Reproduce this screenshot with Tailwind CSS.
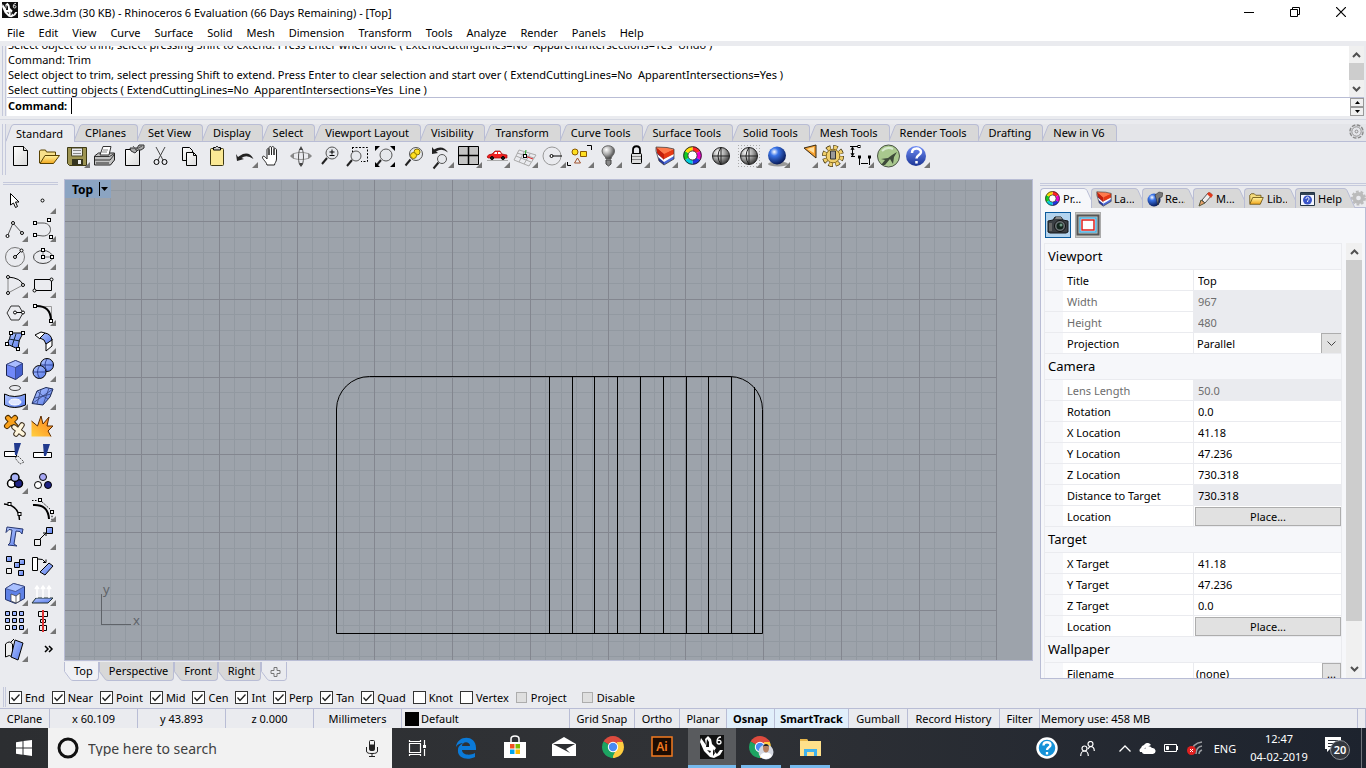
<!DOCTYPE html>
<html lang="en">
<head>
    <meta charset="UTF-8">
    <meta name="viewport" content="width=device-width, initial-scale=1.0">
    <title>sdwe.3dm (30 KB) - Rhinoceros 6 Evaluation (66 Days Remaining) - [Top]</title>
    <script src="https://cdn.jsdelivr.net/npm/@tailwindcss/browser@4"></script>
    <style>
        body { font-family: 'Noto Sans', 'Open Sans', sans-serif; }
    </style>
</head>
<body class="h-screen flex flex-col overflow-hidden bg-[#eaebef] text-black text-[11px] leading-[15px] whitespace-nowrap">
    <!-- shared gradients and symbols -->
    <svg class="absolute w-0 h-0" aria-hidden="true">
        <defs>
            <linearGradient id="gBlue" x1="0" y1="0" x2="1" y2="1"><stop offset="0" stop-color="#b5c8ff"/><stop offset="1" stop-color="#5478ea"/></linearGradient>
            <linearGradient id="gYellow" x1="0" y1="0" x2="0" y2="1"><stop offset="0" stop-color="#fff3a0"/><stop offset="1" stop-color="#f2a71c"/></linearGradient>
            <linearGradient id="gPage" x1="0" y1="0" x2="1" y2="1"><stop offset="0" stop-color="#fff"/><stop offset="1" stop-color="#d9d9d9"/></linearGradient>
            <linearGradient id="gHelp" x1="0" y1="0" x2="0" y2="1"><stop offset="0" stop-color="#6f8cf5"/><stop offset="1" stop-color="#1b3596"/></linearGradient>
            <linearGradient id="gOrange" x1="1" y1="0" x2="0" y2="1"><stop offset="0" stop-color="#ff7d1a"/><stop offset="1" stop-color="#ffd040"/></linearGradient>
            <radialGradient id="gGray" cx=".35" cy=".3" r=".75"><stop offset="0" stop-color="#fff"/><stop offset=".5" stop-color="#a5a5a5"/><stop offset="1" stop-color="#333"/></radialGradient>
            <radialGradient id="gBall" cx=".35" cy=".3" r=".75"><stop offset="0" stop-color="#fff"/><stop offset=".3" stop-color="#3a74e8"/><stop offset="1" stop-color="#04134d"/></radialGradient>
            <symbol id="wheel" viewBox="0 0 20 20">
                <g fill="none" stroke-width="5">
                    <path stroke="#f22" d="M10 3A7 7 0 0 1 16.1 6.5"/><path stroke="#e0c" d="M16.1 6.5A7 7 0 0 1 16.1 13.5"/><path stroke="#23d" d="M16.1 13.5A7 7 0 0 1 10 17"/>
                    <path stroke="#0cd" d="M10 17A7 7 0 0 1 3.9 13.5"/><path stroke="#1c2" d="M3.9 13.5A7 7 0 0 1 3.9 6.5"/><path stroke="#fd0" d="M3.9 6.5A7 7 0 0 1 10 3"/>
                </g>
                <circle cx="10" cy="10" r="9.3" fill="none" stroke="#222"/><circle cx="10" cy="10" r="4.8" fill="#fff" stroke="#333"/>
            </symbol>
            <symbol id="layers" viewBox="0 0 20 20">
                <path d="M2 6l7 6v7l-5-4z" fill="#26379c"/><path d="M9 12l10-5v6l-10 6z" fill="#4a68d8"/>
                <path d="M2 8l7 5v3l-6-5z" fill="#fff"/><path d="M9 13l10-6v3l-10 6z" fill="#fff"/>
                <path d="M1 1l8 6v7L2 7z" fill="#c3200c"/><path d="M9 7l10-4v5L9 13z" fill="#e63a14"/><path d="M1 1l11 .5L19 3 9 8z" fill="#ff7a4c"/>
                <path d="M1 1l11 .5L19 3v10L9 19l-5-4L1 5z" fill="none" stroke="#333" stroke-width=".7"/>
            </symbol>
            <symbol id="rhino" viewBox="0 0 24 24">
                <path fill="#111" d="M0 0h24v24H0z"/>
                <path fill="#fff" d="M1 3l5 7-1-6 3-3 3 3 1 5 4 4-2 3 3 3 3-4 3 0-3 5-6 3-4-1-6-6-4-9z"/><path fill="#111" d="M7 4l2 3v5l-3 0zM7 15l4 1-1 2zM13 14l2 4-2 3z"/>
                <path fill="none" stroke="#fff" stroke-width="1.300" d="M21 2c-3 0-4 2-4 5a2 2 0 1 0 4 0c0-2-3-2-4-1"/>
            </symbol>
            <symbol id="chrome" viewBox="0 0 24 24">
                <path fill="#dd4b3e" d="M12 12L2.500 6.500A11 11 0 0 1 21.500 6.500z"/><path fill="#ffcd40" d="M12 12h0l9.500-5.500A11 11 0 0 1 12 23z"/><path fill="#1da462" d="M12 12V23A11 11 0 0 1 2.500 6.500z"/>
                <path fill="#dd4b3e" d="M12 7h9.800L21 5H8z"/><path fill="#ffcd40" d="M17 14l-5 9 2-.2L21.800 7H16z"/><path fill="#1da462" d="M2.500 6.500L8 15l6 2-3 6-6-3z"/>
                <circle cx="12" cy="12" r="5.200" fill="#fff"/><circle cx="12" cy="12" r="4.200" fill="#4a8af4"/>
            </symbol>
            <symbol id="folder" viewBox="0 0 20 16">
                <path d="M1 14V3l2-2h4l2 2h7v3" fill="#f5dc7c" stroke="#5a4200"/><path d="M1 15L5 6h14l-4 9z" fill="url(#gYellow)" stroke="#5a4200"/>
            </symbol>
        </defs>
    </svg>

    <!-- title bar -->
    <header class="bg-white">
        <div class="flex items-center h-6 pl-[2px]">
            <svg class="size-4 mb-1"><use href="#rhino"/></svg>
            <h1 class="ml-[5px] flex-1">sdwe.3dm (30 KB) - Rhinoceros 6 Evaluation (66 Days Remaining) - [Top]</h1>
            <button aria-label="Minimize" class="w-[46px] h-5 grid place-items-center"><svg width="10" height="10" stroke="#000"><path d="M0 5.500h10"/></svg></button>
            <button aria-label="Restore" class="w-[46px] h-5 grid place-items-center"><svg width="10" height="10" fill="none" stroke="#000"><path d="M.5 2.500h7v7h-7zM2.500 2.500v-2h7v7h-2"/></svg></button>
            <button aria-label="Close" class="w-[46px] h-5 grid place-items-center"><svg width="10" height="10" stroke="#000" stroke-width="1.200"><path d="M0 0l10 10M10 0L0 10"/></svg></button>
            <span class="w-[2px]"></span>
        </div>
        <nav id="menu" class="flex h-[17px] items-center gap-[14px] pl-[7px]"></nav>
    </header>

    <!-- command history and prompt -->
    <section class="mt-[5px] h-[70px] flex pl-[2px] pr-[2px]">
        <div class="w-[5px] border-l border-[#c5c9dc]"><div class="ml-[2px] h-full border-l border-[#c5c9dc]"></div></div>
        <div class="flex-1 flex flex-col min-w-0">
            <div class="h-[51px] flex bg-white">
                <div class="flex-1 overflow-hidden flex flex-col justify-end pl-px whitespace-pre"><p>Select object to trim, select pressing Shift to extend. Press Enter when done ( ExtendCuttingLines=No  ApparentIntersections=Yes  Undo )</p><p>Command: Trim</p><p>Select object to trim, select pressing Shift to extend. Press Enter to clear selection and start over ( ExtendCuttingLines=No  ApparentIntersections=Yes )</p><p>Select cutting objects ( ExtendCuttingLines=No  ApparentIntersections=Yes  Line )</p></div>
                <div class="w-[15px] bg-[#f0f0f0] flex flex-col items-center">
                    <svg class="h-[17px]" width="9" fill="none" stroke="#505050" stroke-width="2"><path d="M1 11l3.500-3.500L8 11"/></svg>
                    <div class="w-full h-[17px] bg-[#cdcdcd]"></div>
                    <svg class="h-[17px]" width="9" fill="none" stroke="#505050" stroke-width="2"><path d="M1 7l3.500 3.500L8 7"/></svg>
                </div>
            </div>
            <div class="flex-1 flex bg-white border-t border-[#b9bdd5]">
                <label for="cmd" class="font-bold pl-px mr-1">Command:</label>
                <span class="w-px h-4 bg-black"></span>
                <input id="cmd" type="text" class="flex-1 h-4 outline-none">
                <div class="w-[14px] flex flex-col">
                    <button aria-label="Previous" class="flex-1 bg-[#f0f0f0] border border-[#999] grid place-items-center"><svg width="5" height="3"><path d="M0 3L2.500 0 5 3z"/></svg></button>
                    <button aria-label="Next" class="flex-1 bg-[#f0f0f0] border border-[#999] grid place-items-center"><svg width="5" height="3"><path d="M0 0l2.500 3L5 0z"/></svg></button>
                </div>
            </div>
        </div>
    </section>

    <!-- toolbar tabs -->
    <section class="mt-[3px] h-[60px] border-t border-[#d5d8e2] flex pl-[2px]">
        <div class="my-1 w-[4px] border-x border-[#c5c9dc]"></div>
        <div class="flex-1 min-w-0">
            <div class="mt-1 flex items-end justify-between border-b border-[#b9bdd5] bg-[#e4e5e9]">
                <div id="toolTabs" class="flex" role="tablist"></div>
                <button aria-label="Options" class="mr-[2px] mb-[2px]"><svg width="15" height="15" viewBox="0 0 16 16" fill="none" stroke="#8a8a8a"><circle cx="8" cy="8" r="7" stroke-dasharray="4 1.500" stroke-width="1.500"/><circle cx="8" cy="8" r="5"/><circle cx="8" cy="8" r="1.500"/></svg></button>
            </div>
            <div id="toolbar" class="flex h-[37px]" role="toolbar"></div>
        </div>
    </section>

    <!-- workspace -->
    <main class="flex-1 min-h-0 flex">
        <aside class="w-16 shrink-0 pt-[3px]">
            <div class="ml-[3px] mr-[6px] h-[3px] border-y border-[#c5c9dc]"></div>
            <div id="tools" class="mt-[3px] grid grid-cols-[28px_28px]" role="toolbar"></div>
        </aside>

        <section class="flex-1 min-w-0 flex flex-col">
            <div class="relative h-[482px] border border-[#b9bdd5] bg-[#9da3ab] overflow-hidden">
                <svg id="view" class="block w-full h-full" shape-rendering="crispEdges">
                    <g id="minor" stroke="#9299a1"></g>
                    <g id="major" stroke="#83868f"></g>
                    <path d="M36.500 414v30.500H66" fill="none" stroke="#5f6369"/>
                    <g fill="#5f6369" font-size="13"><text x="38" y="414">y</text><text x="68" y="445">x</text></g>
                    <g id="stripes" stroke="#000"></g>
                    <path d="M271.500 453.500V229a33 33 0 0 1 33-32.500H665a33 33 0 0 1 32.500 33V453.500z" fill="none" stroke="#000" shape-rendering="auto"/>
                </svg>
                <button class="absolute left-0 top-0 h-[18px] w-[46px] pl-[7px] flex items-center gap-[6px] bg-[#8ba4c2] font-bold text-[12px]">Top
                    <svg width="9" height="14"><path d="M.5 0v14" stroke="#000"/><path d="M2 5h7L5.500 9z"/></svg>
                </button>
            </div>
            <div id="viewTabs" class="flex mt-px" role="tablist"></div>
        </section>

        <!-- properties panel -->
        <aside class="w-[326px] ml-[7px] pt-[4px] shrink-0 flex flex-col">
            <div class="h-[3px] border-y border-[#c5c9dc]"></div>
            <div id="panelTabs" class="mt-[2px] flex" role="tablist"></div>
            <div class="h-[472px] border border-[#b9bdd5] bg-[#f6f7fa] pl-[3px] pr-[3px] flex flex-col overflow-hidden">
                <div class="pl-px pt-[4px] flex gap-1 h-[35px] shrink-0">
                    <button aria-label="Camera" class="size-[26px] bg-[#b3d3ee] border border-[#0c5a9c] grid place-items-center">
                        <svg width="22" height="20" viewBox="0 0 22 20"><path d="M1 6l5-1 2-3h6l2 3 5 1v11l-2 1H3l-2-1z" fill="#3b3f44" stroke="#16181a"/><path d="M9 2h5l1 2H8z" fill="#888"/><path d="M2 8h3v8H2z" fill="#666"/><circle cx="13" cy="11" r="5.500" fill="#6d7478" stroke="#111"/><circle cx="13" cy="11" r="3.500" fill="#14251d"/><circle cx="14" cy="10" r="1.500" fill="#6f9b86"/></svg>
                    </button>
                    <button aria-label="Viewport frame" class="size-[26px] bg-[#c8c8c4] border border-[#aaa] grid place-items-center">
                        <svg width="24" height="22" viewBox="0 0 24 22"><path d="M1.500 1.500h21v19h-21z" fill="#c9cac7" stroke="#565656" stroke-width="2"/><path d="M4 4h16v14H4z" fill="#fff" stroke="#4ab3e4" stroke-width="1.500"/><path d="M6 6h12v10H6z" fill="#fff" stroke="#e0201c" stroke-width="1.500"/></svg>
                    </button>
                </div>
                <div class="flex flex-1 min-h-0 gap-1">
                    <div class="flex-1 overflow-hidden">
                        <table class="w-full table-fixed border-separate border-spacing-0 border-l border-[#eaebef]">
                            <colgroup><col class="w-[18px]"><col class="w-[131px]"><col></colgroup>
                            <tbody id="props"></tbody>
                        </table>
                    </div>
                    <div class="w-4 bg-[#f0f0f0] flex flex-col items-center">
                        <svg class="h-[17px] shrink-0" width="9" fill="none" stroke="#505050" stroke-width="2"><path d="M1 11l3.500-3.500L8 11"/></svg>
                        <div class="w-full h-[361px] bg-[#cdcdcd]"></div>
                        <svg class="mt-auto h-[17px] shrink-0" width="9" fill="none" stroke="#505050" stroke-width="2"><path d="M1 6l3.500 3.500L8 6"/></svg>
                    </div>
                </div>
            </div>
        </aside>
    </main>

    <!-- object snaps -->
    <section class="h-[20px] mb-px flex items-center pl-[3px]">
        <div class="h-full w-[3px] mr-[3px] border-x border-[#c5c9dc]"></div>
        <form id="snaps" class="flex gap-[7px]"></form>
    </section>

    <!-- status bar -->
    <footer class="h-5 flex border-t border-[#b9bdd5] text-center leading-[19px] *:border-r *:border-[#b9bdd5] *:shrink-0">
        <div class="w-[50px]">CPlane</div>
        <div class="w-[88px]">x 60.109</div>
        <div class="w-[88px]">y 43.893</div>
        <div class="w-[88px]">z 0.000</div>
        <div class="w-[88px]">Millimeters</div>
        <button class="w-[168px] pl-[3px] flex items-center gap-[2px]"><span class="w-[14px] h-[14px] bg-black"></span>Default</button>
        <button class="w-[65px]">Grid Snap</button>
        <button class="w-[45px]">Ortho</button>
        <button class="w-[47px]">Planar</button>
        <button class="w-[48px] bg-[#e1effb] font-bold">Osnap</button>
        <button class="w-[74px] bg-[#e1effb] font-bold">SmartTrack</button>
        <button class="w-[59px]">Gumball</button>
        <button class="w-[92px]">Record History</button>
        <button class="w-[40px]">Filter</button>
        <div class="flex-1 text-left pl-px">Memory use: 458 MB</div>
        <div class="w-[8px]"></div>
    </footer>

    <!-- taskbar -->
    <footer class="h-10 shrink-0 flex items-center bg-gradient-to-r from-[#2c2e31] via-[#303236] to-[#1d232e] text-white">
        <button aria-label="Start" class="w-12 h-full grid place-items-center"><svg width="16" height="16" fill="#fff"><path d="M0 2.200L6.500 1.300V7.500H0zM7.500 1.100L16 0v7.500H7.500zM0 8.500h6.500v6.200L0 13.800zM7.500 8.500H16V16l-8.500-1.200z"/></svg></button>
        <label class="w-[344px] h-full bg-[#f2f2f2] flex items-center pl-[9px] pr-[14px] gap-[9px]">
            <svg width="22" height="22"><circle cx="11" cy="11" r="9" fill="none" stroke="#111" stroke-width="3"/></svg>
            <input type="text" aria-label="Search" placeholder="Type here to search" class="flex-1 text-[14px] placeholder:text-[#3f3f3f] outline-none">
            <svg width="12" height="17" fill="none" stroke="#222"><rect x="3.500" y=".5" width="5" height="10" rx="1"/><path d="M4 5h4v5H4z" fill="#222"/><path d="M.5 7v4c0 2 2 2.500 5.500 2.500s5.500-.5 5.500-2.500V7M6 13.500V16M3 16.500h6"/></svg>
        </label>
        <div id="apps" class="flex h-full items-center"></div>
        <div id="tray" class="ml-auto flex h-full items-center">
            <button aria-label="Get help" class="w-6 mr-[20px]"><svg width="22" height="22"><circle cx="11" cy="11" r="9.500" fill="#1592d8" stroke="#fff" stroke-width="2.500"/><path d="M7.500 8.500c0-4.500 7-4 7-.5 0 2.500-3.500 2-3.500 5M11 15v2.500" fill="none" stroke="#fff" stroke-width="2.300"/></svg></button>
            <button aria-label="People" class="w-5 mr-[19px]"><svg width="15" height="15" fill="none" stroke="#fff" stroke-width="1.200"><circle cx="10.500" cy="3" r="2.500"/><circle cx="4.500" cy="7.500" r="2.500"/><path d="M.7 15c0-3 1.800-5 3.800-5s3.800 2 3.800 5M8 8q1-2 2.500-2.500c2 0 3.800 1.500 3.800 4.500"/></svg></button>
            <button aria-label="Show hidden icons" class="w-5"><svg width="12" height="7" fill="none" stroke="#fff" stroke-width="1.300"><path d="M.5 6.500L6 1l5.500 5.500"/></svg></button>
            <svg width="17" height="11" fill="#fff"><path d="M1 9a3 3 0 0 1 1-4 4 4 0 0 1 3-3 4 4 0 0 1 7 0L6 5 4 9zM5 11a2.500 2.500 0 0 1 1-5 4 4 0 0 1 7-1 3 3 0 0 1 1 6z"/></svg>
            <svg class="ml-2" width="15" height="10" fill="none" stroke="#fff"><path d="M.5 1.500h12v7H.5zM13.500 3v4"/><path fill="#fff" d="M2.500 3.500h2v3h-2z"/></svg>
            <svg class="ml-2" width="16" height="14" fill="none"><path stroke="#9b9da1" stroke-width="1.500" d="M15 1Q5 2 5 12M15 5q-6 1-6 8M15 9q-3 1-3 4"/><circle cx="4.500" cy="9.500" r="4.500" fill="#e02020"/><path d="M3 8l3 3M6 8l-3 3" stroke="#fff"/></svg>
            <button class="ml-[10px] w-6">ENG</button>
            <div class="w-[60px] ml-[12px] text-center leading-[18px]"><p>12:47</p><p>04-02-2019</p></div>
            <button aria-label="Notifications" class="ml-[15px] mr-[9px]">
                <svg width="28" height="24"><path d="M1 1h16v12H6l-3 3v-3H1z" fill="#fff"/><path d="M4 4.500h10M4 7.500h10M4 10.500h6" stroke="#2a2e36"/><circle cx="16" cy="14" r="9.500" fill="#33373e" stroke="#8d9095"/><text x="16" y="18" fill="#fff" font-size="11" font-weight="600" text-anchor="middle">20</text></svg>
            </button>
            <span class="w-[5px] h-full border-l border-[#70747b]"></span>
        </div>
    </footer>

    <script>
        const byId = id => document.getElementById(id);
        const fill = (id, html) => { byId(id).innerHTML = html; };
        const lines = pts => pts.map(([x, y, w = 3]) => `<rect x="${x - w / 2}" y="${y - w / 2}" width="${w}" height="${w}" fill="#fff" stroke="#000"/>`).join('');
        const dots = pts => pts.map(([x, y]) => `<circle cx="${x}" cy="${y}" r="1.500" fill="#fff" stroke="#000"/>`).join('');

        fill('menu', ['File', 'Edit', 'View', 'Curve', 'Surface', 'Solid', 'Mesh', 'Dimension', 'Transform', 'Tools', 'Analyze', 'Render', 'Panels', 'Help']
            .map(t => `<button>${t}</button>`).join(''));

        fill('toolTabs', ['Standard', 'CPlanes', 'Set View', 'Display', 'Select', 'Viewport Layout', 'Visibility', 'Transform', 'Curve Tools', 'Surface Tools', 'Solid Tools', 'Mesh Tools', 'Render Tools', 'Drafting', 'New in V6']
            .map((t, i) => i === 0
                ? `<button role="tab" aria-selected="true" class="relative z-10 -mb-px flex h-[18px]"><svg width="8" height="18"><path d="M0 18L6 2Q7 .5 8 .5V18z" fill="#eaebef" stroke="none"/><path d="M0 17L5 3Q6 .5 8 .5" fill="none" stroke="#b9bdd5"/></svg><span class="h-[18px] pl-[2px] pr-[11px] leading-[17px] border-t border-r border-[#b9bdd5] rounded-tr bg-[#eaebef]">${t}</span></button>`
                : `<button role="tab" class="-ml-px flex h-[17px]"><svg width="9" height="17"><path d="M0 17L6 2Q7 .5 9 .5V17z" fill="#d8d8d8"/><path d="M0 17L6 2Q7 .5 9 .5" fill="none" stroke="#b9bdd5"/></svg><span class="h-[17px] pl-[2px] pr-[11px] leading-[16px] border-t border-r border-[#b9bdd5] rounded-tr bg-[#d8d8d8]">${t}</span></button>`).join(''));

        // every tool icon is drawn in a 28x28 cell; the flag adds the fly-out corner
        const cell = ([name, art, more]) => `<button title="${name}" class="size-7"><svg width="28" height="28" fill="none" stroke="#000">${art}${more ? '<path d="M28 20v6h-6z" fill="#757575" stroke="none"/>' : ''}</svg></button>`;
        const lens = (x, y, r) => `<path d="M${x - r + 1} ${y + r - 1}l-5 6" stroke="#222" stroke-width="2"/><circle cx="${x}" cy="${y}" r="${r}" fill="#e6e8ec" stroke="#555"/>`;
        const globe = '<circle cx="15" cy="14" r="8.500" fill="url(#gGray)" stroke="#222"/><path d="M6.500 14h17M15 5.500v17M15 5.500q-6 8.500 0 17" stroke="#222"/>';

        fill('toolbar', [
            ['New', '<path d="M7.500 4.500h10l4 4v15h-14z" fill="url(#gPage)"/><path d="M17.500 4.500v4h4" fill="#ddd"/>'],
            ['Open', '<path d="M5.500 21V9l1-1h5l1 2h9v3" fill="#f7e08b" stroke="#5a4200"/><path d="M6 21.500l5-8h14.500l-6 8z" fill="url(#gYellow)" stroke="#5a4200"/>'],
            ['Save', '<path d="M5.500 5.500h19v18h-17l-2-2z" fill="#9d9452" stroke="#3f3a14"/><path d="M9.500 6h11v8h-11z" fill="#e9eaee" stroke="#4b4724"/><path d="M11 8.500h8M11 11.500h8" stroke="#888"/><path d="M10 17h11v6H10z" fill="#35341f" stroke="none"/><path d="M16 18h3v4h-3z" fill="#eee" stroke="none"/>', 1],
            ['Print', '<path d="M4.500 14l4-3h16v7l-4 5h-16z" fill="#c2c2c2" stroke="#222"/><path d="M10 13l3-8.500h8L19 13z" fill="#fff" stroke="#333"/><path d="M13 8h5M12 10h5" stroke="#888"/><path d="M4.500 14.500h15l5-3M5 18h15l4-5" stroke="#333"/><path d="M6 20h13v2H6z" fill="#777" stroke="none"/>'],
            ['Document Properties', '<path d="M7.500 7.500h14v16h-14z" fill="url(#gPage)"/><path d="M12 6h7l2-3h5v3l-3 2h-3l-3 3-4-2z" fill="#aaa" stroke="#333"/><path d="M15 4l4 5M17 8l7-4" stroke="#555"/>'],
            ['Cut', '<path d="M10 5l7 13M19 5l-7 13" stroke="#444"/><circle cx="10.500" cy="20" r="2.500"/><circle cx="18.500" cy="20" r="2.500"/>'],
            ['Copy', '<path d="M8.500 5.500h7l3 3v10h-10z" fill="url(#gPage)"/><path d="M12.500 10.500h7l3 3v10h-10z" fill="url(#gPage)"/><path d="M19.500 10.500v3h3"/>'],
            ['Paste', '<rect x="8.500" y="6.500" width="13" height="17" rx="1" fill="#fbe995" stroke="#3f3a14"/><path d="M11.500 8V5.500h2l1-1h1l1 1h2V8z" fill="#ccc"/>'],
            ['Undo', '<path d="M6 12l1 7 7-2-2.500-1q5-4 12 1-5-9-14-3L8 15z" fill="#222" stroke="none"/>', 1],
            ['Pan', '<path d="M9 23c-1-4-5-6-4.500-8s3 0 4.500 2V8c0-2 2-2 2 0v5V6c0-2 2.500-2 2.500 0v7V6c0-2 2.500-2 2.500 0v7V8c0-2 2.500-2 2.500 0v9c0 3-2 4-2 6z" fill="#fff" stroke="#222"/>'],
            ['Rotate View', '<ellipse cx="15" cy="14" rx="10" ry="3.500" stroke="#999"/><ellipse cx="15" cy="15" rx="2.500" ry="9" stroke="#555"/><path d="M13 8l2-4 2 4zM13 21l2 4 2-4z" fill="#444" stroke="none"/><path d="M8 11l-4 3 4 3zM22 11l4 3-4 3z" fill="#888" stroke="none"/>'],
            ['Zoom', lens(18, 11, 6) + '<path d="M18 7.500v5M15.500 10h5M15.500 13.500h5"/>'],
            ['Zoom Window', '<path d="M10 5.500h15.500v14H19M10.500 5v5" stroke-dasharray="2 1.500"/>' + lens(14, 14, 5)],
            ['Zoom Extents', lens(16, 13, 6) + '<path d="M5 4h5l-5 5zM25 4v5l-5-5zM25 25h-5l5-5zM5 25v-5l5 5z" fill="#000" stroke="none"/>'],
            ['Zoom Selected', lens(18, 12, 6.5) + '<circle cx="19" cy="10" r="3" fill="#ffdf20" stroke="#8b7400"/><circle cx="15.500" cy="13.500" r="3" fill="#ffdf20" stroke="#8b7400"/>'],
            ['Undo View Change', '<path d="M6 5l0 7 6-1-2-1.500q6-4 12 1-5-8-14-3z" fill="#222" stroke="none"/>' + lens(16, 17, 4.5), 1],
            ['4 Viewports', '<path d="M4.500 4.500h20v18h-20z" fill="#c4c4c4"/><path d="M14.500 4.500v18M4.500 13.500h20" stroke-width="1.500"/>', 1],
            ['Named Views', '<path d="M5 15q1-3 5-3l3-3h5l2 3 5 1v3H6z" fill="#f02020" stroke="#a01010" stroke-width=".7"/><path d="M13 10h2v2h-3zM16 10h2l1 2h-3z" fill="#fff" stroke="none"/><circle cx="10" cy="16" r="1.500" fill="#222"/><circle cx="21" cy="16" r="1.500" fill="#222"/><path d="M5 18.500h21" stroke="#aaa"/>', 1],
            ['Set CPlane', '<path d="M9 8l17 5-7 11L4 18zM7 11l17 5M6 14l15 6M14 10L9 20M20 12l-6 10" stroke="#aaa"/><path d="M15 14l8 3" stroke="#d22"/><path d="M15 14l1-6" stroke="#2a2"/>' + lines([[15, 14, 3]]), 1],
            ['Object Snap', '<circle cx="14" cy="14" r="9" stroke="#999"/><path d="M14 14h10"/>' + dots([[13.5, 14]]), 1],
            ['Select', '<path d="M21 3.500h4.500V8M1.500 20v3.500H5"/><circle cx="9" cy="10" r="3" fill="#ffdf20" stroke="#8b5a00"/><path d="M14.500 9.500h6v5h-6z" fill="#ffdf20" stroke="#8b5a00"/><path d="M11.500 16l3 5h-6z" stroke="#a0522d"/>', 1],
            ['Hide', '<path d="M12 17c0-3-4-4-4-8 0-7 12.500-7 12.500 0 0 4-3.500 5-3.500 8z" fill="url(#gGray)" stroke="#666"/><path d="M12 18h5v4l-2.500 2-2.500-2z" fill="#888" stroke="#444"/>', 1],
            ['Lock', '<path d="M11 12V8c0-5 7-5 7 0v4" stroke-width="1.800"/><rect x="9.500" y="11.500" width="10" height="10" rx="1" fill="#ddd"/><path d="M10 14.500h9M10 17.500h9" stroke="#888"/>', 1],
            ['Layers', '<use href="#layers" x="5" y="4" width="20" height="20" stroke="none"/>', 1],
            ['Properties', '<use href="#wheel" x="5" y="4" width="19" height="19" stroke="none"/>', 1],
            ['Wireframe Viewport', globe],
            ['Shaded Viewport', '<path d="M4 3.500h22M4 6.500h22M4 9.500h22M4 12.500h22M4 15.500h22M4 18.500h22M4 21.500h22M4 24.500h22" stroke="#a9a9a9" stroke-dasharray="1 2"/>' + globe, 1],
            ['Render', '<ellipse cx="16" cy="22" rx="10" ry="2.500" fill="#999" stroke="none"/><circle cx="15" cy="13.500" r="9" fill="url(#gBall)" stroke="none"/>', 1],
            ['Spotlight', '<path d="M14 6l12-3v13z" fill="#f7a233" stroke="#3a2a10"/><path d="M17 7l7-2v6z" fill="#ffe0a0" stroke="none"/>', 1],
            ['Options', '<circle cx="15" cy="14" r="8.500" stroke="#3f300a" stroke-width="5" stroke-dasharray="4.200 2.475"/><circle cx="15" cy="14" r="8.300" stroke="#f0cf6c" stroke-width="4" stroke-dasharray="3.200 3.319" stroke-dashoffset="-.5"/><circle cx="15" cy="14" r="6.800" fill="#f0cf6c" stroke="#8a6c20"/><path d="M12.500 9h5v8h-5z" fill="#999" stroke="#333"/>', 1],
            ['Dimension', '<path d="M4 4.500h8M5 14.500h4M6.500 6v7M13.500 14v9M23.500 14v9M15 21.500h7"/><path d="M5 8l1.500-3L8 8M5 11l1.500 3L8 11"/>' + lines([[13, 4.5, 2], [13.5, 15, 2], [23.5, 15, 2]]), 1],
            ['Grasshopper', '<circle cx="14.500" cy="14" r="11" fill="#a9c88e" stroke="#4a5446"/><path d="M7 23l4-5-4-1 7-1 4-3 5-3-3 5-1 7-3-5-5 6z" fill="#3e4a3a" stroke="none"/><path d="M8 9q5-5 11-2" stroke="#d8ead0" stroke-width="2"/>'],
            ['Help', '<circle cx="14" cy="14" r="10" fill="url(#gHelp)" stroke="none"/><path d="M10 11c0-6 9-5.500 9-1 0 3-4.500 3-4.500 6.500M14.500 19v2.500" stroke="#fff" stroke-width="2.500"/>', 1]
        ].map(cell).join(''));

        fill('tools', [
            ['Select', '<path d="M10.500 5.500v11.500l3-2 2 4.500 2-1-2-4.500h3.500z" fill="#fff"/>'],
            ['Point', dots([[14.5, 12.5]]), 1],
            ['Polyline', '<path d="M7.500 20L13 7l9 10" stroke="#555"/>' + dots([[7.5, 20], [13, 7], [22, 17]]), 1],
            ['Curve', '<path d="M7 7h8c10 0 10 13 0 13l-8-1" stroke="#555"/>' + lines([[7, 7], [21, 4], [7, 19], [23, 21]]), 1],
            ['Circle', '<circle cx="15" cy="13" r="9.500" stroke="#777"/><path d="M15 13l7-7"/>' + dots([[15, 13], [21.5, 6.5]]), 1],
            ['Ellipse', '<ellipse cx="15" cy="13" rx="9.500" ry="6.500" stroke="#444"/><path d="M15 6v7h9" stroke="#777"/>' + lines([[15, 6], [15, 13], [24, 13]]), 1],
            ['Arc', '<path d="M8 21l15-8M8 5v16" stroke="#888"/><path d="M8 5q13 1 15 8"/>' + dots([[8, 5], [23, 13], [8, 21]]), 1],
            ['Rectangle', '<path d="M6.500 7.500h17v11h-17z"/>' + dots([[23.5, 7.5], [6.5, 18.5]]), 1],
            ['Polygon', '<path d="M7 13l4-7h8l4 7-4 7h-8z" stroke="#333"/><path d="M15 12.500h8"/>' + dots([[15, 12.5], [23, 12.5]]), 1],
            ['Fillet', '<path d="M7 6.500h16.500V22" stroke="#999"/><path d="M7 6q16-1 16 15" stroke-width="2"/>' + lines([[7, 6], [23, 21]]), 1],
            ['Surface', '<path d="M11 5l12 0q-5 7-5 16l-11-5q3-5 4-11z" fill="url(#gBlue)"/><path d="M9 11l11 2M16 6l-4 12" stroke="#123"/>' + lines([[11, 5], [23, 5], [18, 21], [7, 16]]), 1],
            ['Surface Edge', '<path d="M7 7l6-3 4 1-5 6zM18 15l6-4v7l-6 5z" fill="#fff"/><path d="M12 10l5-5q6 1 7 7l-6 4q-1-5-6-6z" fill="url(#gBlue)"/>', 1],
            ['Box', '<path d="M6.500 8.500l9-4 7 3v11l-7 5-9-4z" fill="#7088f8" stroke="#1a2350"/><path d="M6.500 8.500l9-4 7 3-7 4z" fill="#a9bcff" stroke="#33427c" stroke-width=".7"/><path d="M15.500 11.500l7-4v11l-7 5z" fill="#4661d0" stroke="#33427c" stroke-width=".7"/>', 1],
            ['Boolean Union', '<circle cx="19" cy="9" r="6.500" fill="url(#gBlue)"/><circle cx="11.500" cy="16" r="6.500" fill="url(#gBlue)"/><path d="M5 16h13M11.500 10q-4 6 0 12M13 9h12M19 3q-4 6 0 12" stroke="#1d2e80" stroke-width=".8"/>', 1],
            ['Project', '<ellipse cx="15" cy="4" rx="5.500" ry="2.500" stroke="#444"/><path d="M4.500 10q10 5 21 0v11q-11 5-21 0z" fill="url(#gBlue)"/><ellipse cx="15" cy="18" rx="6" ry="3" fill="#dfe6ff" stroke="#fff"/>', 1],
            ['Mesh', '<path d="M9 7l9-3.500 7 1.500-3 8-7 8-11-1.500z" fill="url(#gBlue)" stroke="#1c2a55"/><path d="M7 14l8-2 8-2M13 5.500L9 20M21 4l-6 17M9 7l6 5 10-7M5 19l10-7 5 3" stroke="#33427c" stroke-width=".8"/>', 1],
            ['Join', '<g stroke-linecap="round"><path d="M8 6l8 9M15 6L7 14" stroke="#4a2b00" stroke-width="6"/><path d="M8 6l8 9M15 6L7 14" stroke="#f9a11b" stroke-width="4"/><path d="M14 15l9 7M22 13l-6 9" stroke="#3d3020" stroke-width="5.500"/><path d="M14 15l9 7M22 13l-6 9" stroke="#fff6dd" stroke-width="3.500"/></g>'],
            ['Explode', '<path d="M3.500 24.500V9l6 5L13 4l2 8 6-7-2 9 6 0-5 5 3 5.500z" fill="url(#gOrange)" stroke="none"/><path d="M3.500 9l6 5L13 4l2 8 6-7-2 9 6 0-5 5 3 5.500" stroke="#5a2a00"/>'],
            ['Trim', '<path d="M4.500 11.500h12v5h-12z" fill="#fff"/><path d="M14 3h7l-4 12h-2z" fill="#213a8e" stroke="none"/><path d="M15 18l3-2 6 6-4 2z" stroke="#555" stroke-dasharray="2 1"/>'],
            ['Split', '<path d="M5.500 12.500h18v5h-18z" fill="#fff"/><path d="M15 4h7l-4 12h-2z" fill="#213a8e" stroke="none"/>'],
            ['Group', '<circle cx="11.500" cy="15.500" r="4" fill="#fff" stroke-width="1.500"/><circle cx="18.500" cy="15.500" r="4" fill="#1f2384" stroke-width="1.500"/><circle cx="15" cy="9.500" r="4" fill="#a8b2f6" stroke-width="1.500"/>', 1],
            ['Ungroup', '<circle cx="15" cy="9" r="3.500" fill="#a8a8f6"/><circle cx="10" cy="17" r="3.500" fill="#fff"/><circle cx="20" cy="17" r="3.500" fill="#1f2384"/>'],
            ['Edit Points', '<path d="M4 8q15 1 15.500 16" stroke-width="1.500"/>' + lines([[9.5, 8], [19.5, 18]])],
            ['Control Points', '<path d="M4 4.500h8M12 4l12 11v10" stroke-dasharray="1.500 1.500"/><path d="M5 9q15-1 16 14" stroke-width="2"/>' + lines([[12, 4], [24, 16]]), 1],
            ['Text', '<path d="M7 3l16 2-1 5-2-2.500-4-.5-2 13 3 2-9-1 2-2 2-13-3-.5-3 3z" fill="url(#gBlue)" stroke="#25356f"/>'],
            ['Move', '<path d="M12 15l6-6M15 9h3v3"/><path d="M6.500 15.500h6v6h-6z" fill="#eee"/><path d="M18.500 3.500h6v6h-6z" fill="url(#gBlue)"/>', 1],
            ['Copy', '<g fill="url(#gBlue)"><path d="M6.500 4.500h5v5h-5z"/><path d="M19.500 7.500h5v5h-5z"/><path d="M14.500 10.500h5v5h-5z"/><path d="M18.500 18.500h5v5h-5z"/></g><path d="M6.500 16.500h5v5h-5z" fill="#eee"/>'],
            ['Rotate', '<path d="M4.500 5.500h5v13h-5z" fill="#fff"/><path d="M12 20l9-9 4 3-8 9z" fill="url(#gBlue)"/><path d="M10 7q5-1 8 4M15 10.500h3v-3" />'],
            ['Solid Edit', '<path d="M5.500 8.500l8-5 11 3v12l-9 5-10-4z" fill="#5f82e6" stroke="#1f2f66"/><path d="M5.500 8.500l8-5 11 3-9 5z" fill="#a9c0ff" stroke="#33427c" stroke-width=".7"/><path d="M11 14l5 2v7l-5-2zM16 16l4-3v8l-4 2" fill="#fff" stroke="#333" stroke-width=".7"/>', 1],
            ['Extrude', '<path d="M8 18h17l-5 5H4z" fill="url(#gBlue)" stroke="#233"/><path d="M9 18V7M15 18V7M21 18V7M7 9l2-3 2 3M13 9l2-3 2 3M19 9l2-3 2 3" stroke="#fff" stroke-width="1.500"/>', 1],
            ['Array', '<g fill="#9db6ff"><path d="M5.500 3.500h4v4h-4zM12.500 3.500h4v4h-4zM19.500 3.500h4v4h-4zM5.500 10.500h4v4h-4zM12.500 10.500h4v4h-4zM19.500 10.500h4v4h-4zM12.500 17.500h4v4h-4zM19.500 17.500h4v4h-4z"/></g><path d="M5.500 17.500h4v4h-4z" fill="#fff"/>', 1],
            ['Align', '<path d="M10.500 3.500h9v5h-9zM12.500 11.500h5v3h-5zM11.500 17.500h7v5h-7z" fill="#eee"/><path d="M15 2v22" stroke="#d33" stroke-width="2"/>', 1],
            ['Flow', '<path d="M5.500 8q4-4 7 0v13q-3-3-7 0z" fill="#eee"/><path d="M15 4l8 3-5 17-7-3z" fill="url(#gBlue)"/><path d="M11 6l3-3" />', 1],
            ['More', '<path d="M17 10l3 3-3 3M21 10l3 3-3 3" stroke-width="1.500"/>']
        ].map(cell).join(''));

        // construction plane grid: one major line every five minor ones
        const step = 77.75, gridRight = 932;
        const grid = (isMajor) => {
            let out = '';
            for (let i = -5; i <= 55; i++) {
                if ((i % 5 === 0) !== isMajor) continue;
                const x = Math.round(76 + i * step / 5) + .5;
                if (x < gridRight) out += `<path d="M${x} 0V480"/>`;
            }
            for (let i = -2; i <= 28; i++) {
                if ((i % 5 === 0) !== isMajor) continue;
                const y = Math.round(41 + i * step / 5) + .5;
                out += `<path d="M0 ${y}H${gridRight}"/>`;
            }
            return out;
        };
        fill('minor', grid(false));
        fill('major', grid(true));
        fill('stripes', [484, 507, 529, 552, 575, 598, 621, 643, 666].map(x => `<path d="M${x}.5 197V453"/>`).join('') + '<path d="M689.5 207V453"/>');

        fill('viewTabs', ['Top', 'Perspective', 'Front', 'Right'].map((t, i) => {
            const body = i === 0 ? 'pl-px pr-[5px] leading-[18px] border-b border-r border-[#b9bdd5] rounded-br bg-[#f0f1f5]' : 'pl-px pr-[5px] leading-[18px] border-b border-r border-[#b9bdd5] rounded-br bg-[#d8d8d8]';
            const tone = i === 0 ? '#f0f1f5' : '#d8d8d8';
            return `<button role="tab" class="flex h-[19px] text-[11px]"><svg width="9" height="19"><path d="M0 0v10l6 8q1 .5 3 .5V0z" fill="${tone}"/><path d="M.5 0v9.500l6 8q1 1 3 1" fill="none" stroke="#b9bdd5"/></svg><span class="${body}">${t}</span></button>`;
        }).join('') + '<button aria-label="New viewport" class="flex h-[19px]"><svg width="26" height="19" fill="none"><path d="M.5 0v9.500l6 8q1 1 3 1H23q2.500 0 2.500-3V0" stroke="#b9bdd5"/><path d="M13 5.500h3v3h3v3h-3v3h-3v-3h-3v-3h3z" stroke="#777"/></svg></button>');

        const panelIcons = [
            ['Pr...', '<use href="#wheel" width="15" height="15"/>'],
            ['La...', '<use href="#layers" width="16" height="16"/>'],
            ['Re...', '<circle cx="7" cy="9" r="6.500" fill="url(#gBall)"/><path d="M8 4l4-3 4 1-1 4-3 1-1 7-2-7z" fill="#777" stroke="#222" stroke-width=".5"/>'],
            ['M...', '<path d="M1 15l2-6 4 3z" fill="#e8a06a" stroke="#553"/><path d="M4 9l6-7q3-1 4 2l-7 8z" fill="#eee" stroke="#555"/><path d="M9 3l4 4 2-3-4-3z" fill="#e23a1c"/>'],
            ['Lib...', '<use href="#folder" y="2" width="15" height="12"/>'],
            ['Help', '<path d="M.5 1.500h14v13H.5z" fill="#f4f6ff" stroke="#234"/><path d="M1 2h13v2H1z" fill="#345"/><circle cx="7.500" cy="9" r="4.500" fill="#3a55c8"/><path d="M6 8c0-2.500 3-2.500 3 0 0 1-1.500 1-1.500 3" stroke="#fff" fill="none"/>']
        ];
        fill('panelTabs', panelIcons.map(([t, art], i) => {
            const body = i === 0
                ? 'h-5 w-[43px] pl-1 flex items-center gap-[2px] border-t border-l border-[#b9bdd5] rounded-tl bg-[#f6f7fa]'
                : i === 5 ? 'h-5 w-[48px] pl-1 flex items-center gap-[2px] border-t border-l border-[#b9bdd5] rounded-tl bg-[#d8d8d8]'
                : 'h-5 w-[43px] pl-1 flex items-center gap-[2px] border-t border-l border-[#b9bdd5] rounded-tl bg-[#d8d8d8]';
            const tone = i === 0 ? '#f6f7fa' : '#d8d8d8';
            return `<button role="tab" class="flex relative -mb-px"><span class="${body}"><svg class="shrink-0" width="16" height="16">${art}</svg>${t}</span><svg class="-mr-1" width="12" height="20"><path d="M0 0h1q2 0 3 2l8 18H0z" fill="${tone}"/><path d="M0 .5h1q2 0 3 2l8 17.500" fill="none" stroke="#b9bdd5"/></svg></button>`;
        }).join('') + '<button aria-label="Panel options" class="ml-auto"><svg width="15" height="16" viewBox="0 0 16 16" fill="none"><circle cx="8" cy="8" r="4.500" stroke="#bbb" stroke-width="4"/><circle cx="8" cy="8" r="7" stroke="#bbb" stroke-width="2" stroke-dasharray="3 2"/></svg></button>');

        const groups = {
            Viewport: [['Title', 'Top'], ['Width', '967', 'off'], ['Height', '480', 'off'], ['Projection', 'Parallel', 'list']],
            Camera: [['Lens Length', '50.0', 'off'], ['Rotation', '0.0'], ['X Location', '41.18'], ['Y Location', '47.236'], ['Z Location', '730.318'], ['Distance to Target', '730.318', 'read'], ['Location', 'Place...', 'button']],
            Target: [['X Target', '41.18'], ['Y Target', '47.236'], ['Z Target', '0.0'], ['Location', 'Place...', 'button']],
            Wallpaper: [['Filename', '(none)', 'file']]
        };
        const field = (id, value, kind) => {
            if (kind === 'off') return `<input id="${id}" disabled value="${value}" class="block w-full h-5 pl-1 bg-[#eaebef] text-[#6d6d6d]">`;
            if (kind === 'read') return `<input id="${id}" readonly value="${value}" class="block w-full h-5 pl-1 bg-[#eaebef]">`;
            if (kind === 'list') return `<div class="relative"><select id="${id}" class="block appearance-none w-full h-5 pl-[3px] bg-white"><option>${value}</option></select><span class="absolute right-0 top-0 pointer-events-none w-5 h-5 grid place-items-center bg-[#e1e1e1] border-l border-t border-[#adadad]"><svg width="9" height="6" fill="none" stroke="#444"><path d="M.5.5l4 4 4-4"/></svg></span></div>`;
            if (kind === 'button') return `<div class="pl-px"><button id="${id}" class="block w-full h-[19px] bg-[#e1e1e1] border border-[#adadad] leading-[17px]">${value}</button></div>`;
            if (kind === 'file') return `<div class="flex"><input id="${id}" value="${value}" class="block flex-1 min-w-0 h-5 pl-[2px]"><button class="w-[19px] h-5 bg-[#e1e1e1] border border-[#adadad]">...</button></div>`;
            return `<input id="${id}" value="${value}" class="block w-full h-5 pl-1">`;
        };
        fill('props', Object.entries(groups).map(([name, rows]) =>
            `<tr><th colspan="3" class="h-[26px] p-0 pl-[3px] text-left font-normal text-[13px] leading-[25px] border-b border-r border-[#eaebef] ${name === 'Viewport' ? 'border-t' : 'border-t-0'}">${name}</th></tr>` +
            rows.map(([label, value, kind], i) => {
                const id = `${name}-${i}`.toLowerCase();
                return `<tr><td class="h-[21px] p-0 border-b border-[#eaebef]"></td><td class="p-0 pl-1 bg-white border-b border-r border-[#eaebef] ${kind === 'off' ? 'text-[#6d6d6d]' : 'text-black'}"><label for="${id}">${label}</label></td><td class="p-0 bg-white border-b border-r border-[#eaebef]">${field(id, value, kind)}</td></tr>`;
            }).join('')).join(''));

        const on = ['End', 'Near', 'Point', 'Mid', 'Cen', 'Int', 'Perp', 'Tan', 'Quad'];
        fill('snaps', [...on, 'Knot', 'Vertex'].map(t => `<label class="flex items-center gap-[3px]"><span class="grid"><input type="checkbox" ${on.includes(t) ? 'checked' : ''} class="peer [grid-area:1/1] appearance-none size-[13px] bg-white border border-[#333]"><svg class="[grid-area:1/1] invisible peer-checked:visible pointer-events-none" width="13" height="13" fill="none" stroke="#222" stroke-width="1.300"><path d="M2.500 6.500L5 9.500l5.500-6"/></svg></span>${t}</label>`).join('')
            + '<label class="flex items-center gap-1"><input type="checkbox" disabled class="appearance-none size-[11px] bg-[#dfdfdf] border border-[#adadad]">Project</label><label class="ml-2 flex items-center gap-1"><input type="checkbox" disabled class="appearance-none size-[11px] bg-[#dfdfdf] border border-[#adadad]">Disable</label>');

        const apps = [
            ['Task View', '<g fill="none" stroke="#fff" stroke-width="1.200"><path d="M5 9.500h12M5 18.500h12M5.500 6v1.500h11V6M5.500 22v-1.500h11V22M5.500 9.500v9M16.500 9.500v9M20.500 6v5M20.500 15v7"/></g><path d="M19 11h3v3h-3z" fill="#fff"/>'],
            ['Edge', '<path d="M3 13C4 1 23 0 23 14v2H9c0 5 8 6 13 3v4c-8 4-18 1-17-7 0-4 3-6 6-7-4 0-6 1-8 4zm6-1h8c0-5-8-5-8 0z" fill="#0b7ad8"/>'],
            ['Store', '<path d="M2 8h22v16H2z" fill="#fff"/><path d="M9 9V5c0-4 8-4 8 0v4" fill="none" stroke="#fff" stroke-width="1.500"/><path d="M8 10h4.500v4.500H8z" fill="#f25022"/><path d="M13.500 10H18v4.500h-4.500z" fill="#7fba00"/><path d="M8 15.500h4.500V20H8z" fill="#00a4ef"/><path d="M13.500 15.500H18V20h-4.500z" fill="#ffb900"/>'],
            ['Mail', '<path d="M1 10l12-7 12 7v12H1z" fill="#fff"/><path d="M2 10h22l-9 5 4 4z" fill="#2d2f32"/>'],
            ['Chrome', '<use href="#chrome" x="1" y="1" width="24" height="24"/>'],
            ['Illustrator', '<path d="M3 3h20v19H3z" fill="#1d0c02" stroke="#f47b20" stroke-width="1.500"/><text x="13" y="17" fill="#f47b20" font-size="12" font-weight="600" text-anchor="middle">Ai</text>'],
            ['Rhinoceros 6', '<use href="#rhino" x="1" y="1" width="24" height="24"/>'],
            ['Chrome profile', '<use href="#chrome" x="0" y="1" width="24" height="24"/><circle cx="18" cy="18" r="7.500" fill="#d5d9e2"/><path d="M15 14c0-4 6-4 6 0 0 6-6 6-6 0z" fill="#b5805f"/><path d="M15 13c0-4 6-4 6 0l-1-1h-4z" fill="#222"/><path d="M12 22q2-4 6-3 4-1 6 3-6 6-12 0z" fill="#fff"/>'],
            ['File Explorer', '<path d="M3 5h7l1 2h13v15H3z" fill="#ffe08a"/><path d="M3 5h7l1 2H3z" fill="#e7b64a"/><path d="M7 22v-7h13v7h-3v-4h-7v4z" fill="#3fb1ec"/>']
        ];
        fill('apps', apps.map(([name, art], i) => {
            const cls = i === 6 ? 'ml-[2px] w-12 h-full grid place-items-center bg-[#595b5e] border-b-3 border-[#76b9ed]'
                : i > 6 ? 'w-10 ml-[5px] mr-1 h-full grid place-items-center border-b-3 border-[#76b9ed]'
                : 'w-[49px] h-full grid place-items-center border-b-3 border-transparent';
            return `<button title="${name}" class="${cls}"><svg width="26" height="26">${art}</svg></button>`;
        }).join(''));
    </script>
</body>
</html>
